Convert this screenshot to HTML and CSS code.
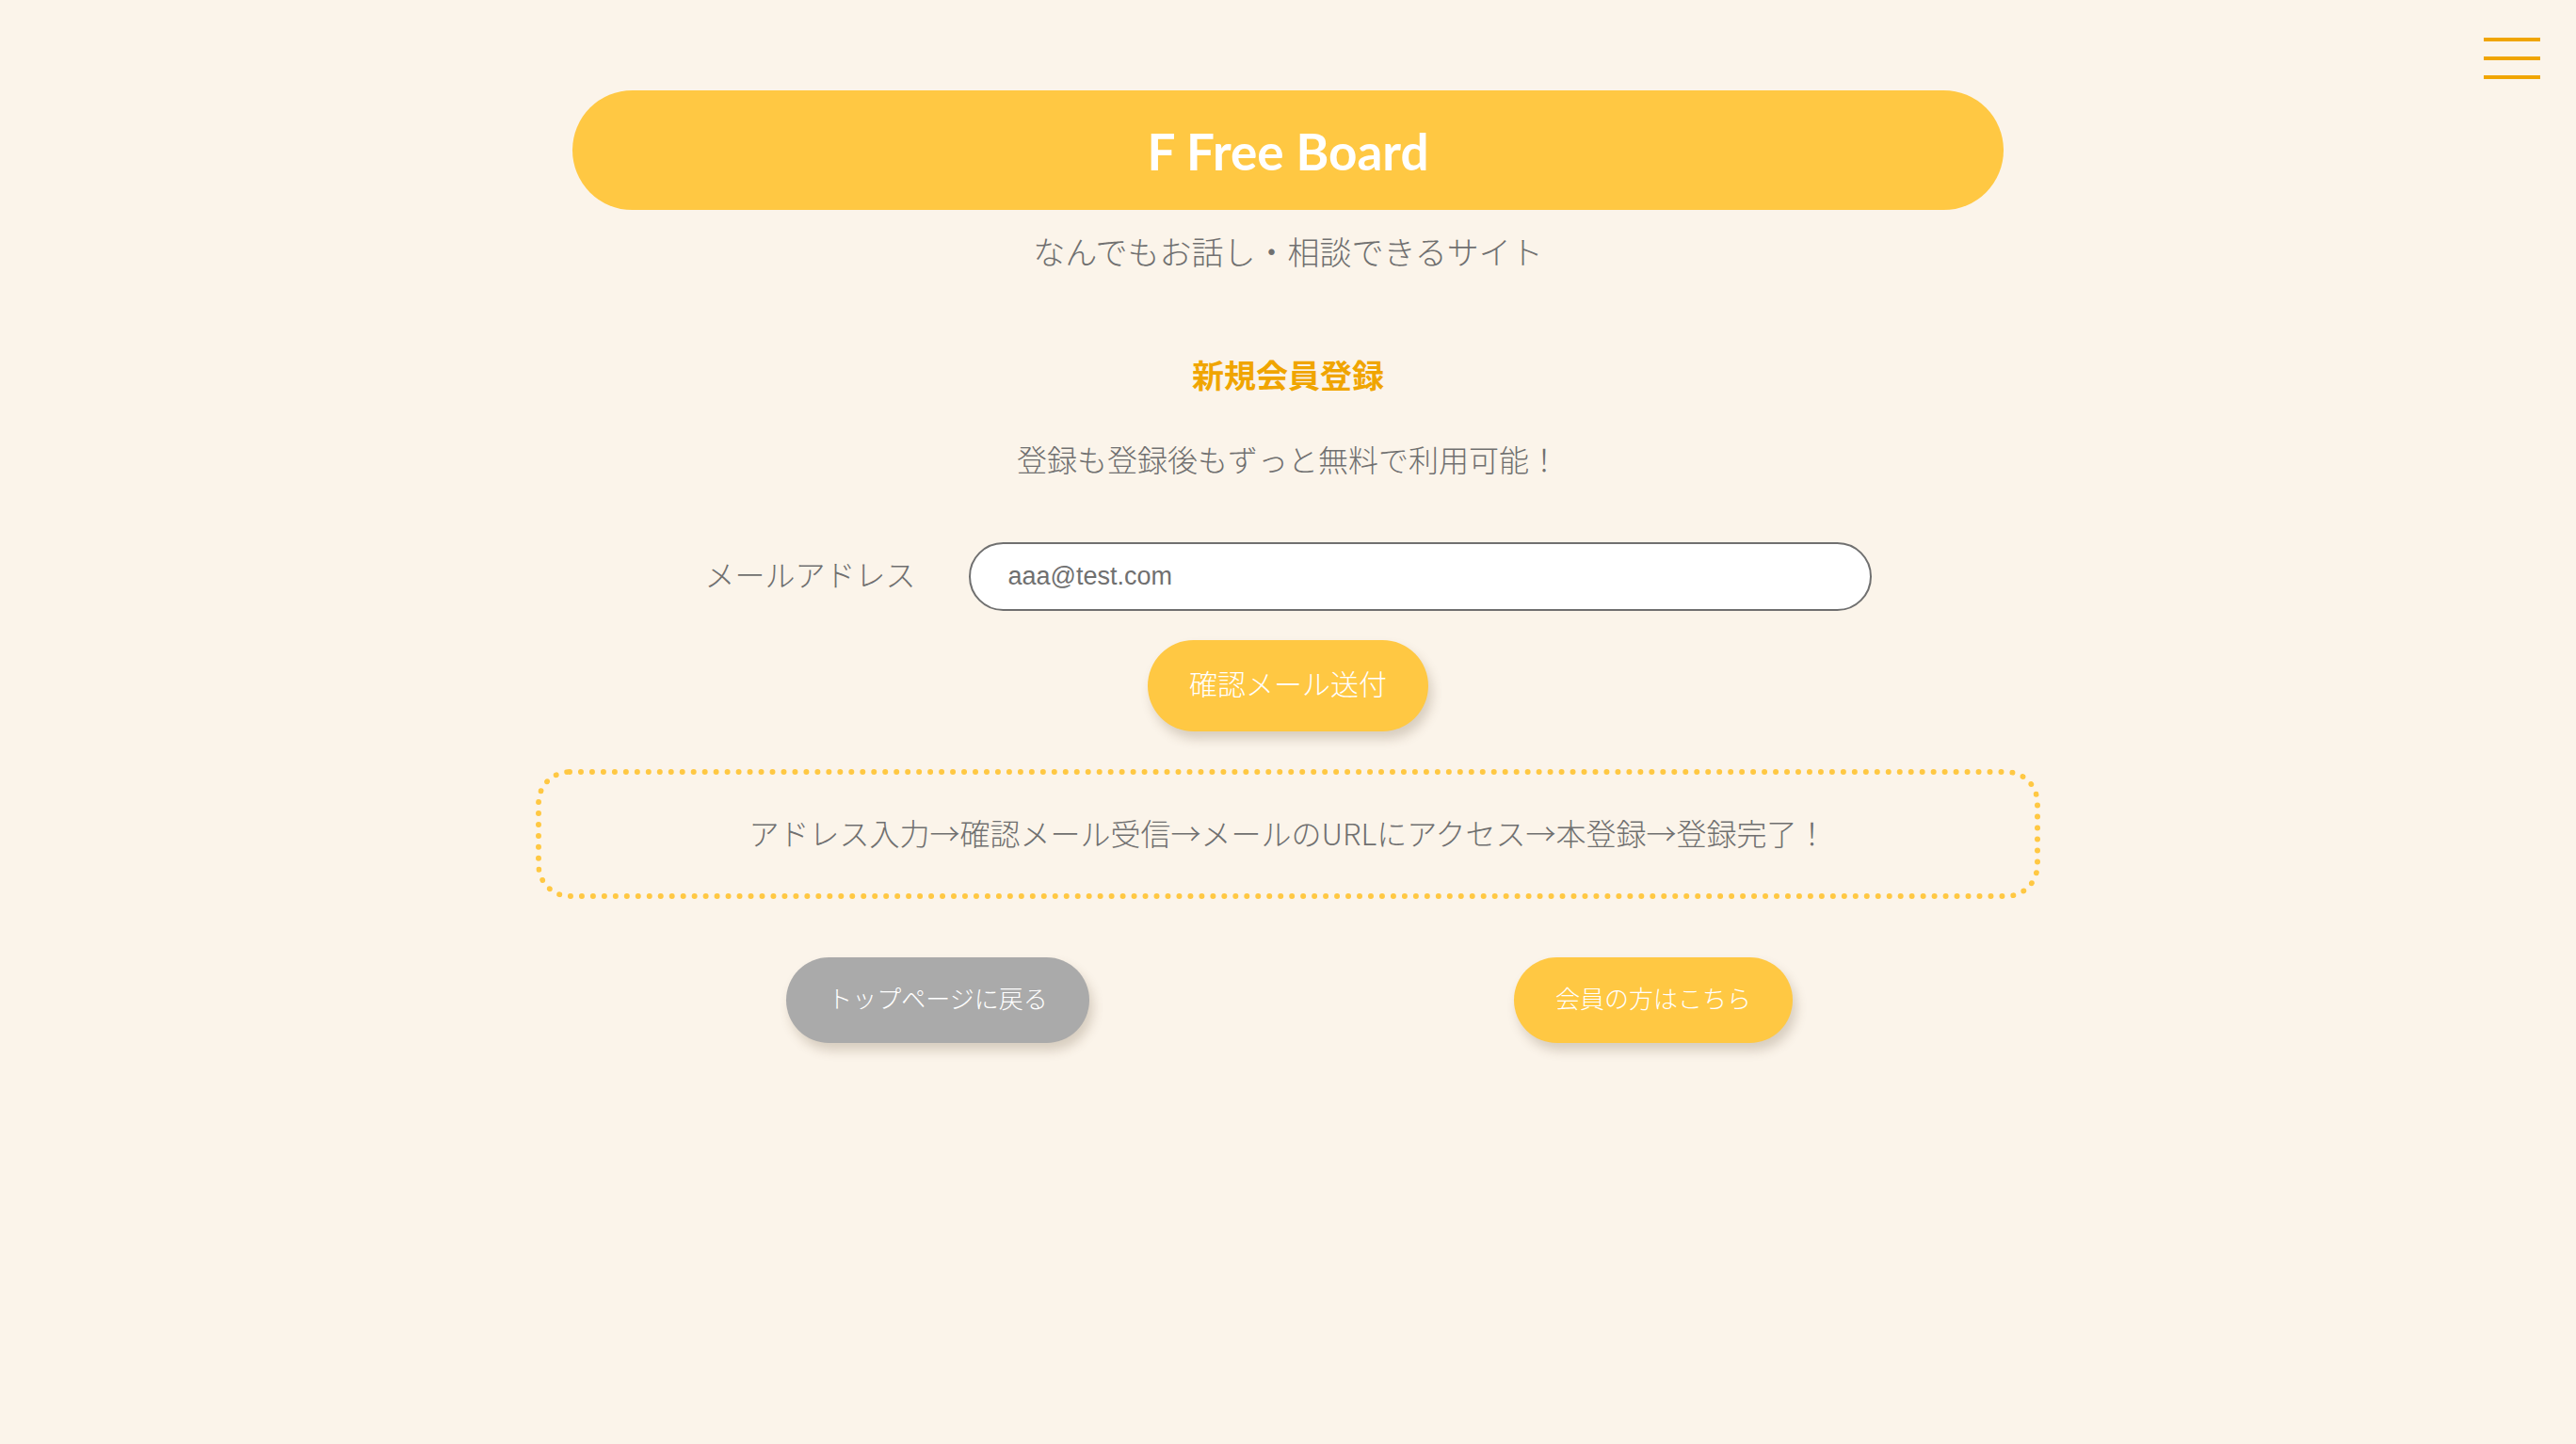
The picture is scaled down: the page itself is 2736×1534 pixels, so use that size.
FILE: index.html
```html
<!DOCTYPE html>
<html lang="ja">
<head>
<meta charset="utf-8">
<title>F Free Board - 新規会員登録</title>
<link rel="stylesheet" href="styles.css">
</head>
<body>
<button class="menu-btn" aria-label="メニュー">
  <span class="menu-bar"></span>
  <span class="menu-bar"></span>
  <span class="menu-bar"></span>
</button>
<main class="page">
  <header class="site-header">
    <h1 class="site-title">F Free Board</h1>
  </header>
  <p class="site-sub">なんでもお話し・相談できるサイト</p>

  <h2 class="section-title">新規会員登録</h2>
  <p class="lead">登録も登録後もずっと無料で利用可能！</p>

  <form class="reg-form">
    <div class="form-row">
      <label class="form-label" for="email">メールアドレス</label>
      <input class="form-input" id="email" type="email" value="aaa@test.com">
    </div>
    <button class="btn btn-yellow btn-send" type="button">確認メール送付</button>
  </form>

  <div class="flow-box">アドレス入力→確認メール受信→メールのURLにアクセス→本登録→登録完了！</div>

  <div class="nav-row">
    <div class="nav-cell"><a class="btn btn-gray btn-small" href="#">トップページに戻る</a></div>
    <div class="nav-cell"><a class="btn btn-yellow btn-small" href="#">会員の方はこちら</a></div>
  </div>
</main>
</body>
</html>
```
FILE: styles.css
```css
html, body {
  margin: 0;
  padding: 0;
}
body {
  background: #FBF4EA;
  color: #707070;
  font-family: "Noto Sans CJK JP", "Noto Sans", sans-serif;
  font-weight: 300;
  min-height: 1534px;
}
.menu-btn {
  position: absolute;
  top: 40px;
  right: 38px;
  width: 60px;
  padding: 0;
  border: 0;
  background: transparent;
  display: flex;
  flex-direction: column;
  gap: 16px;
  cursor: pointer;
}
.menu-bar {
  display: block;
  height: 4px;
  width: 60px;
  background: #F0A500;
}
.page {
  width: 1520px;
  margin: 96px auto 0;
  display: flex;
  flex-direction: column;
  align-items: center;
}
.site-header {
  width: 100%;
  height: 127px;
  background: #FFC843;
  border-radius: 64px;
  display: flex;
  align-items: center;
  justify-content: center;
}
.site-title {
  margin: 0;
  padding-top: 2px;
  color: #fff;
  font-family: "Lato", "Open Sans", sans-serif;
  font-weight: 700;
  font-size: 53px;
  line-height: 1;
  letter-spacing: 0;
}
.site-sub {
  margin: 18px 0 0;
  font-size: 34px;
  line-height: 51px;
}
.section-title {
  margin: 80px 0 0;
  font-size: 34px;
  line-height: 51px;
  font-weight: 700;
  color: #F0A500;
}
.lead {
  margin: 40px 0 0;
  font-size: 32px;
  line-height: 48px;
}
.reg-form {
  margin-top: 65px;
  display: flex;
  flex-direction: column;
  align-items: center;
}
.form-row {
  display: flex;
  align-items: center;
  gap: 56px;
}
.form-label {
  font-size: 32px;
  line-height: 48px;
  margin-bottom: 7px;
  color: #707070;
}
.form-input {
  box-sizing: border-box;
  width: 959px;
  height: 73px;
  border: 2px solid #707070;
  border-radius: 37px;
  background: #fff;
  padding: 0 40px;
  font-family: "Liberation Sans", Arial, sans-serif;
  font-weight: 400;
  font-size: 27px;
  color: #707070;
  outline: none;
}
.btn {
  box-sizing: border-box;
  display: inline-flex;
  align-items: center;
  justify-content: center;
  border: 0;
  color: #fff;
  font-family: "Noto Sans CJK JP", sans-serif;
  font-weight: 300;
  text-decoration: none;
  white-space: nowrap;
  box-shadow: 4px 8px 12px rgba(90, 70, 40, 0.22);
  cursor: pointer;
}
.btn-yellow {
  background: #FFC843;
}
.btn-gray {
  background: #AAAAAA;
}
.btn-send {
  margin-top: 31px;
  height: 97px;
  padding: 0 44px 7px;
  border-radius: 49px;
  font-size: 30px;
}
.flow-box {
  box-sizing: border-box;
  margin-top: 40px;
  width: 1598px;
  height: 138px;
  padding-bottom: 4px;
  border: 6px dotted #FFC843;
  border-radius: 36px;
  display: flex;
  align-items: center;
  justify-content: center;
  font-size: 32px;
  line-height: 48px;
}
.nav-row {
  box-sizing: border-box;
  margin-top: 62px;
  width: 1536px;
  padding-left: 16px;
  display: grid;
  grid-template-columns: 1fr 1fr;
}
.nav-cell {
  display: flex;
  justify-content: center;
}
.btn-small {
  height: 91px;
  padding: 0 44px 7px;
  border-radius: 46px;
  font-size: 26px;
}
```
